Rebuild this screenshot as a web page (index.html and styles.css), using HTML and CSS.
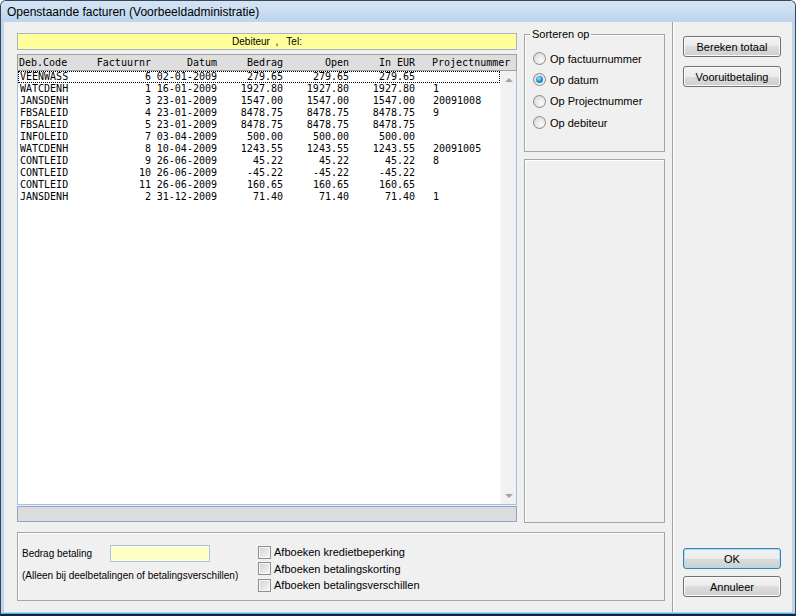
FILE: index.html
```html
<!DOCTYPE html>
<html>
<head>
<meta charset="utf-8">
<title>Openstaande facturen</title>
<link rel="stylesheet" href="styles.css">
</head>
<body>
<div class="window">
  <div class="titlebar">Openstaande facturen (Voorbeeldadministratie)</div>
  <div class="client">
    <div class="main">
      <div class="toprow">
        <div class="listcol">
          <div class="debbar">Debiteur  ,   Tel:</div>
          <div class="listbox">
            <div class="row hdr">
              <span class="c1">Deb.Code</span><span class="c2">Factuurnr</span><span class="c3">Datum</span><span class="c4">Bedrag</span><span class="c5">Open</span><span class="c6">In EUR</span><span class="c7">Projectnummer</span>
            </div>
            <div class="lbody">
              <div class="rows">
                <div class="row focus"><span class="c1">VEENWASS</span><span class="c2">6</span><span class="c3">02-01-2009</span><span class="c4">279.65</span><span class="c5">279.65</span><span class="c6">279.65</span><span class="c7"></span></div>
                <div class="row"><span class="c1">WATCDENH</span><span class="c2">1</span><span class="c3">16-01-2009</span><span class="c4">1927.80</span><span class="c5">1927.80</span><span class="c6">1927.80</span><span class="c7">1</span></div>
                <div class="row"><span class="c1">JANSDENH</span><span class="c2">3</span><span class="c3">23-01-2009</span><span class="c4">1547.00</span><span class="c5">1547.00</span><span class="c6">1547.00</span><span class="c7">20091008</span></div>
                <div class="row"><span class="c1">FBSALEID</span><span class="c2">4</span><span class="c3">23-01-2009</span><span class="c4">8478.75</span><span class="c5">8478.75</span><span class="c6">8478.75</span><span class="c7">9</span></div>
                <div class="row"><span class="c1">FBSALEID</span><span class="c2">5</span><span class="c3">23-01-2009</span><span class="c4">8478.75</span><span class="c5">8478.75</span><span class="c6">8478.75</span><span class="c7"></span></div>
                <div class="row"><span class="c1">INFOLEID</span><span class="c2">7</span><span class="c3">03-04-2009</span><span class="c4">500.00</span><span class="c5">500.00</span><span class="c6">500.00</span><span class="c7"></span></div>
                <div class="row"><span class="c1">WATCDENH</span><span class="c2">8</span><span class="c3">10-04-2009</span><span class="c4">1243.55</span><span class="c5">1243.55</span><span class="c6">1243.55</span><span class="c7">20091005</span></div>
                <div class="row"><span class="c1">CONTLEID</span><span class="c2">9</span><span class="c3">26-06-2009</span><span class="c4">45.22</span><span class="c5">45.22</span><span class="c6">45.22</span><span class="c7">8</span></div>
                <div class="row"><span class="c1">CONTLEID</span><span class="c2">10</span><span class="c3">26-06-2009</span><span class="c4">-45.22</span><span class="c5">-45.22</span><span class="c6">-45.22</span><span class="c7"></span></div>
                <div class="row"><span class="c1">CONTLEID</span><span class="c2">11</span><span class="c3">26-06-2009</span><span class="c4">160.65</span><span class="c5">160.65</span><span class="c6">160.65</span><span class="c7"></span></div>
                <div class="row"><span class="c1">JANSDENH</span><span class="c2">2</span><span class="c3">31-12-2009</span><span class="c4">71.40</span><span class="c5">71.40</span><span class="c6">71.40</span><span class="c7">1</span></div>
              </div>
              <div class="vscroll"><span class="arrow-up"></span><span class="arrow-down"></span></div>
            </div>
          </div>
          <div class="statusbar"></div>
        </div>
        <div class="groups">
          <div class="group sort">
            <div class="legend">Sorteren op</div>
            <div class="radio"><span class="rb"></span>Op factuurnummer</div>
            <div class="radio"><span class="rb on"></span>Op datum</div>
            <div class="radio"><span class="rb"></span>Op Projectnummer</div>
            <div class="radio"><span class="rb"></span>Op debiteur</div>
          </div>
          <div class="group empty"></div>
        </div>
      </div>
      <div class="group bottomgroup">
        <div class="pay">
          <div class="payrow"><span class="lbl">Bedrag betaling</span><span class="input"></span></div>
          <div class="note">(Alleen bij deelbetalingen of betalingsverschillen)</div>
        </div>
        <div class="checks">
          <div class="check"><span class="cb"></span>Afboeken kredietbeperking</div>
          <div class="check"><span class="cb"></span>Afboeken betalingskorting</div>
          <div class="check"><span class="cb"></span>Afboeken betalingsverschillen</div>
        </div>
      </div>
    </div>
    <div class="sep"></div>
    <div class="side">
      <div class="btngroup">
        <button class="btn">Bereken totaal</button>
        <button class="btn">Vooruitbetaling</button>
      </div>
      <div class="btngroup tight">
        <button class="btn default">OK</button>
        <button class="btn">Annuleer</button>
      </div>
    </div>
  </div>
</div>
</body>
</html>
```
FILE: styles.css
```css
* { box-sizing: border-box; }
html, body { margin: 0; padding: 0; }
body {
  width: 796px;
  height: 616px;
  overflow: hidden;
  background: #ffffff;
  font-family: "Liberation Sans", Arial, sans-serif;
  font-size: 11px;
  color: #000;
}
.window {
  width: 796px;
  height: 616px;
  border: 1px solid #3a4654;
  border-bottom: 2px solid #13263a;
  border-radius: 6px 6px 0 0;
  padding: 0 3px 2px 3px;
  background: linear-gradient(to top, #38bfe9 0, #38bfe9 1px, #bcd4ee 1px);
  display: flex;
  flex-direction: column;
}
.titlebar {
  height: 21px;
  line-height: 22px;
  padding-left: 3px;
  margin: 0 -3px;
  padding-left: 6px;
  font-size: 12px;
  border-radius: 5px 5px 0 0;
  background: linear-gradient(#d6e5f5, #bcd4ee);
  white-space: nowrap;
}
.client {
  flex: 1;
  background: #f0f0f0;
  display: flex;
}
.main {
  width: 668px;
  padding: 11px 7px 0 13px;
  display: flex;
  flex-direction: column;
}
.toprow {
  height: 490px;
  display: flex;
  gap: 7px;
}
.listcol {
  width: 500px;
  display: flex;
  flex-direction: column;
}
.debbar {
  height: 17px;
  margin-bottom: 4px;
  border: 1px solid #a9b4c2;
  background: #ffff9c;
  font-size: 10px;
  line-height: 15px;
  text-align: center;
  white-space: pre;
}
.listbox {
  height: 451px;
  display: flex;
  flex-direction: column;
  font-family: "DejaVu Sans Mono", "Liberation Mono", monospace;
  font-size: 10px;
}
.row {
  display: grid;
  grid-template-columns: 73px 60px 66px 66px 66px 66px 1fr;
  height: 12px;
  line-height: 12px;
  white-space: pre;
}
.row .c1 { padding-left: 2px; }
.row .c2, .row .c3, .row .c4, .row .c5, .row .c6 { text-align: right; }
.row .c7 { padding-left: 18px; }
.row.hdr {
  height: 17px;
  line-height: 15px;
  border: 1px solid #a0a0a0;
  background: #dedede;
}
.row.hdr .c1 { padding-left: 1px; }
.row.hdr .c7 { padding-left: 17px; }
.lbody {
  flex: 1;
  display: flex;
  border: 1px solid #a7bfe6;
  border-top: none;
  background: #fff;
}
.rows {
  flex: 1;
}
.row.focus {
  outline: 1px dotted #000;
  outline-offset: -1px;
}
.vscroll {
  width: 16px;
  background: #f1f1f1;
  border-left: 1px solid #fafafa;
  display: flex;
  flex-direction: column;
  align-items: center;
  justify-content: space-between;
  padding: 7px 0 6px 0;
}
.arrow-up {
  width: 0; height: 0;
  border-left: 4px solid transparent;
  border-right: 4px solid transparent;
  border-bottom: 4px solid #a3a3a3;
}
.arrow-down {
  width: 0; height: 0;
  border-left: 4px solid transparent;
  border-right: 4px solid transparent;
  border-top: 4px solid #a3a3a3;
}
.statusbar {
  margin-top: 1px;
  height: 16px;
  border: 1px solid #8da6c6;
  background: #dcdcdc;
}
.groups {
  width: 141px;
  padding-top: 1px;
  display: flex;
  flex-direction: column;
  gap: 7px;
}
.group {
  border: 1px solid #a5a5a5;
  box-shadow: inset 1px 1px 0 #ffffff;
}
.sort {
  height: 118px;
}
.empty {
  flex: 1;
}
.legend {
  width: fit-content;
  margin: -7px 0 0 5px;
  padding: 0 2px;
  background: #f0f0f0;
  line-height: 13px;
}
.sort .legend { margin-bottom: 7px; }
.radio {
  height: 21.3px;
  display: flex;
  align-items: center;
  padding-left: 8px;
  white-space: nowrap;
}
.rb {
  width: 13px;
  height: 13px;
  margin-right: 4px;
  border: 1px solid #8b8b8b;
  border-radius: 50%;
  background: radial-gradient(circle at 65% 65%, #fbfbfb 0, #e9e9e9 45%, #cfcfcf 100%);
  display: flex;
  align-items: center;
  justify-content: center;
}
.rb.on::after {
  content: "";
  width: 7px;
  height: 7px;
  border-radius: 50%;
  background: radial-gradient(circle at 40% 35%, #a6e6ff 0, #2a9be0 45%, #0c4a86 100%);
}
.bottomgroup {
  margin-top: 9px;
  height: 69px;
  display: flex;
}
.pay {
  width: 240px;
  padding: 12px 0 0 4px;
  font-size: 10px;
}
.payrow {
  height: 17px;
  display: flex;
  align-items: center;
}
.lbl {
  width: 88px;
}
.input {
  width: 100px;
  height: 17px;
  border: 1px solid #a9c3ea;
  background: #ffffc9;
}
.note {
  margin-top: 8px;
  line-height: 12px;
  white-space: nowrap;
}
.checks {
  padding-top: 11px;
}
.check {
  height: 16.5px;
  display: flex;
  align-items: center;
  white-space: nowrap;
}
.cb {
  width: 13px;
  height: 13px;
  margin-right: 3px;
  border: 1px solid #8e8f8f;
  box-shadow: inset 0 0 0 1px #f6f6f6;
  background: linear-gradient(135deg, #d2d2d2, #f8f8f8);
}
.sep {
  width: 2px;
  border-left: 1px solid #a0a0a0;
  border-right: 1px solid #ffffff;
}
.side {
  flex: 1;
  padding: 14px 0 15px 9px;
  display: flex;
  flex-direction: column;
  justify-content: space-between;
}
.btngroup {
  display: flex;
  flex-direction: column;
  gap: 9px;
}
.btngroup.tight { gap: 7px; }
.btn {
  width: 98px;
  height: 21px;
  padding: 0;
  border: 1px solid #707070;
  border-radius: 3px;
  background: linear-gradient(#f3f3f3 0%, #ebebeb 50%, #dddddd 50%, #cfcfcf 100%);
  box-shadow: inset 0 0 0 1px #fbfbfb;
  font-family: "Liberation Sans", Arial, sans-serif;
  font-size: 11px;
  color: #000;
}
.btn.default {
  border-color: #3c7fb1;
  box-shadow: inset 0 0 0 1px #a3e0f8;
}
```
